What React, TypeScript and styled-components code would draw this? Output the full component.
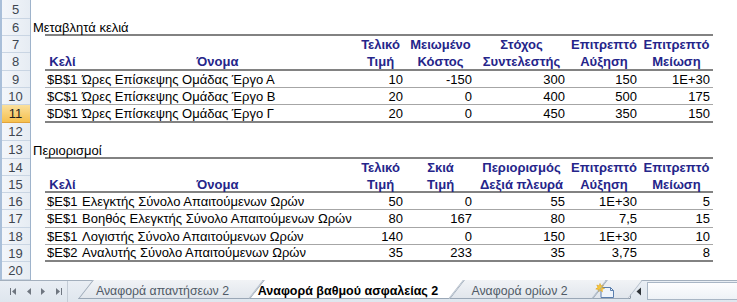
import React from "react";
import styled, { createGlobalStyle } from "styled-components";

const NAVY = "#25258a";
const COLS = "35px 275px 51px 69px 93px 72px 73px";

type Line = "thin" | "thick";

const ROWS: { n: number; h: number }[] = [
  { n: 5, h: 19 },
  { n: 6, h: 17 },
  { n: 7, h: 17 },
  { n: 8, h: 18 },
  { n: 9, h: 17 },
  { n: 10, h: 17 },
  { n: 11, h: 18 },
  { n: 12, h: 18 },
  { n: 13, h: 18 },
  { n: 14, h: 17 },
  { n: 15, h: 17 },
  { n: 16, h: 17 },
  { n: 17, h: 18 },
  { n: 18, h: 17 },
  { n: 19, h: 17 },
  { n: 20, h: 18 },
];

const changing = [
  { cell: "$B$1", name: "Ώρες Επίσκεψης Ομάδας Έργο Α", v: ["10", "-150", "300", "150", "1E+30"] },
  { cell: "$C$1", name: "Ώρες Επίσκεψης Ομάδας Έργο Β", v: ["20", "0", "400", "500", "175"] },
  { cell: "$D$1", name: "Ώρες Επίσκεψης Ομάδας Έργο Γ", v: ["20", "0", "450", "350", "150"] },
];

const constraints = [
  { cell: "$E$1", name: "Ελεγκτής Σύνολο Απαιτούμενων Ωρών", v: ["50", "0", "55", "1E+30", "5"] },
  { cell: "$E$1", name: "Βοηθός Ελεγκτής Σύνολο Απαιτούμενων Ωρών", v: ["80", "167", "80", "7,5", "15"] },
  { cell: "$E$1", name: "Λογιστής Σύνολο Απαιτούμενων Ωρών", v: ["140", "0", "150", "1E+30", "10"] },
  { cell: "$E$2", name: "Αναλυτής Σύνολο Απαιτούμενων Ωρών", v: ["35", "233", "35", "3,75", "8"] },
];

const changingHeads = [
  ["Τελικό", "Τιμή"],
  ["Μειωμένο", "Κόστος"],
  ["Στόχος", "Συντελεστής"],
  ["Επιτρεπτό", "Αύξηση"],
  ["Επιτρεπτό", "Μείωση"],
];

const constraintHeads = [
  ["Τελικό", "Τιμή"],
  ["Σκιά", "Τιμή"],
  ["Περιορισμός", "Δεξιά πλευρά"],
  ["Επιτρεπτό", "Αύξηση"],
  ["Επιτρεπτό", "Μείωση"],
];

const h = (n: number) => ROWS.find(r => r.n === n)!.h;

const NavIcon = ({ kind }: { kind: "first" | "prev" | "next" | "last" }) => (
  <svg width="9" height="9" viewBox="0 0 9 9">
    {kind === "first" && <rect x="1" y="1" width="1" height="7" fill="#6f7680" />}
    {(kind === "first" || kind === "prev") && <path d="M7 1 L3 4.5 L7 8 Z" fill="#6f7680" />}
    {(kind === "next" || kind === "last") && <path d="M2 1 L6 4.5 L2 8 Z" fill="#6f7680" />}
    {kind === "last" && <rect x="7" y="1" width="1" height="7" fill="#6f7680" />}
  </svg>
);

const NewSheetIcon = () => (
  <svg width="20" height="16" viewBox="0 0 20 16">
    <path d="M6 4.5 H15.5 L18.5 7.5 V14.5 H6 Z" fill="#eef4fb" stroke="#5b7fae" />
    <path d="M15.5 4.5 V7.5 H18.5" fill="none" stroke="#5b7fae" />
    <path
      d="M5 0.5 L6 3 L8.5 2 L7.2 4.4 L9.5 5.5 L7 6.2 L7.5 8.8 L5.3 7.2 L3.5 9 L3.4 6.4 L0.8 6 L3 4.4 L1.8 2 L4.2 2.9 Z"
      fill="#f6c73a"
      stroke="#e0a21b"
      strokeWidth="0.6"
    />
  </svg>
);

const App = () => (
  <Window>
    <GlobalStyle />
    <Sheet>
      <RowHeaders>
        {ROWS.map(r => (
          <RowNum key={r.n} $h={r.h} $selected={r.n === 11}>
            {r.n}
          </RowNum>
        ))}
      </RowHeaders>

      <Cells>
        <Blank $h={h(5)} />
        <Title label="Μεταβλητά κελιά" height={h(6)} />
        <HeadRow heads={changingHeads} height={h(7) + h(8)} />
        {changing.map((r, i) => (
          <DataRow key={i} row={r} height={h(9 + i)} line={i === changing.length - 1 ? "thick" : "thin"} />
        ))}
        <Blank $h={h(12)} />
        <Title label="Περιορισμοί" height={h(13)} />
        <HeadRow heads={constraintHeads} height={h(14) + h(15)} />
        {constraints.map((r, i) => (
          <DataRow key={i} row={r} height={h(16 + i)} line={i === constraints.length - 1 ? "thick" : "thin"} />
        ))}
        <Blank $h={h(20)} />
      </Cells>
    </Sheet>

    <TabBar>
      <NavGroup>
        <NavButton><NavIcon kind="first" /></NavButton>
        <NavButton><NavIcon kind="prev" /></NavButton>
        <NavButton><NavIcon kind="next" /></NavButton>
        <NavButton><NavIcon kind="last" /></NavButton>
      </NavGroup>
      <Tabs>
        <Tab $w={171}>Αναφορά απαντήσεων 2</Tab>
        <Tab $w={200} $active>Αναφορά βαθμού ασφαλείας 2</Tab>
        <Tab $w={143}>Αναφορά ορίων 2</Tab>
        <Tab $w={36} $icon>
          <NewSheetIcon />
        </Tab>
      </Tabs>
      <Splitter />
      <ScrollArrow>
        <svg width="6" height="9" viewBox="0 0 6 9">
          <path d="M5 0.5 L0.5 4.5 L5 8.5 Z" fill="#2e3338" />
        </svg>
      </ScrollArrow>
      <ScrollTrack />
    </TabBar>
  </Window>
);

const Title = ({ label, height }: { label: string; height: number }) => (
  <Row $h={height}>
    <TitleText>{label}</TitleText>
    <Table $line="thick" />
  </Row>
);

const HeadRow = ({ heads, height }: { heads: string[][]; height: number }) => (
  <Row $h={height}>
    <ColA />
    <Table $line="thick">
      <HeadCell>Κελί</HeadCell>
      <HeadCell>Όνομα</HeadCell>
      {heads.map((lines, i) => (
        <HeadCell key={i}>
          {lines[0]}
          <br />
          {lines[1]}
        </HeadCell>
      ))}
    </Table>
  </Row>
);

const DataRow = ({
  row,
  height,
  line,
}: {
  row: { cell: string; name: string; v: string[] };
  height: number;
  line: Line;
}) => (
  <Row $h={height}>
    <ColA />
    <Table $line={line}>
      <TextCell>{row.cell}</TextCell>
      <TextCell>{row.name}</TextCell>
      {row.v.map((v, i) => (
        <NumCell key={i}>{v}</NumCell>
      ))}
    </Table>
  </Row>
);

const GlobalStyle = createGlobalStyle`
  html, body {
    margin: 0;
    padding: 0;
    background: #fff;
  }
  body {
    width: 737px;
    height: 302px;
    overflow: hidden;
    font-family: "Liberation Sans", Arial, sans-serif;
    font-size: 13px;
    color: #000;
  }
`;

const Window = styled.div`
  width: 737px;
  height: 302px;
  display: flex;
  flex-direction: column;
  overflow: hidden;
`;

const Sheet = styled.div`
  display: flex;
  height: 280px;
`;

const RowHeaders = styled.div`
  width: 31px;
  flex-shrink: 0;
  display: flex;
  flex-direction: column;
  border-left: 2px solid #a9bfd9;
  box-sizing: border-box;
  background: linear-gradient(to right, #f3f6fa, #e6ecf3);
  border-right: 1px solid #9eb3cb;
`;

const RowNum = styled.div<{ $h: number; $selected?: boolean }>`
  height: ${p => p.$h}px;
  box-sizing: border-box;
  display: flex;
  align-items: center;
  justify-content: center;
  font-size: 13px;
  color: ${p => (p.$selected ? "#1d1d1d" : "#3e4650")};
  border-bottom: 1px solid ${p => (p.$selected ? "#e2a33a" : "#c9d5e3")};
  background: ${p => (p.$selected ? "linear-gradient(#fbe09c, #f5c04f)" : "transparent")};
  padding-right: 1px;
`;

const Cells = styled.div`
  flex: 1;
  display: flex;
  flex-direction: column;
`;

const Blank = styled.div<{ $h: number }>`
  height: ${p => p.$h}px;
`;

const Row = styled.div<{ $h: number }>`
  height: ${p => p.$h}px;
  display: flex;
`;

const ColA = styled.div`
  width: 14px;
  flex-shrink: 0;
`;

const TitleText = styled.div`
  width: 14px;
  flex-shrink: 0;
  padding-left: 2px;
  box-sizing: border-box;
  white-space: nowrap;
  display: flex;
  align-items: center;
  position: relative;
  z-index: 1;
`;

const Table = styled.div<{ $line: Line }>`
  width: 668px;
  flex-shrink: 0;
  box-sizing: border-box;
  display: grid;
  grid-template-columns: ${COLS};
  border-bottom: ${p => (p.$line === "thick" ? "2px solid #828282" : "1px solid #a6a6a6")};
`;

const TextCell = styled.div`
  display: flex;
  align-items: center;
  padding-left: 2px;
  white-space: nowrap;
`;

const NumCell = styled.div`
  display: flex;
  align-items: center;
  justify-content: flex-end;
  padding-right: 3px;
  white-space: nowrap;
`;

const HeadCell = styled.div`
  display: flex;
  align-items: flex-end;
  justify-content: center;
  text-align: center;
  font-weight: 700;
  color: ${NAVY};
  line-height: 17px;
  white-space: nowrap;
`;

const TabBar = styled.div`
  height: 22px;
  display: flex;
  align-items: stretch;
  background: linear-gradient(#e9eef4, #dfe6ee);
  border-top: 1px solid #a3afbd;
  box-sizing: border-box;
  font-size: 12px;
`;

const NavGroup = styled.div`
  width: 68px;
  display: flex;
  align-items: center;
  padding-left: 6px;
  box-sizing: border-box;
  border-right: 1px solid #c4ccd6;
`;

const NavButton = styled.div`
  width: 15px;
  display: flex;
  justify-content: center;
`;

const Tabs = styled.div`
  display: flex;
  padding-left: 4px;
`;

const Tab = styled.div<{ $w: number; $active?: boolean; $icon?: boolean }>`
  position: relative;
  width: ${p => p.$w}px;
  margin-top: -1px;
  display: flex;
  align-items: center;
  justify-content: ${p => (p.$icon ? "flex-start" : "center")};
  padding-left: ${p => (p.$icon ? "9px" : "10px")};
  box-sizing: border-box;
  white-space: nowrap;
  color: ${p => (p.$active ? "#000" : "#505a66")};
  font-weight: ${p => (p.$active ? 700 : 400)};
  font-size: ${p => (p.$active ? "12.5px" : "12.3px")};
  z-index: ${p => (p.$active ? 2 : 1)};

  &::before {
    content: "";
    position: absolute;
    top: 0;
    bottom: 3px;
    left: 6px;
    right: -6px;
    background: ${p => (p.$active ? "#fff" : "linear-gradient(#f1f3f6, #e1e6ec)")};
    border-bottom: 1px solid #9aa7b6;
    border-right: 1px solid #b3bdc9;
    transform: skewX(-38deg);
    transform-origin: bottom left;
    z-index: -1;
  }
  &::after {
    content: "";
    position: absolute;
    top: 0;
    bottom: 3px;
    left: 6px;
    width: 1px;
    background: #9aa7b6;
    transform: skewX(-38deg);
    transform-origin: bottom left;
  }
`;

const Splitter = styled.div`
  width: 5px;
  height: 12px;
  align-self: center;
  margin-left: 2px;
  border: 1px solid #8c97a4;
  background: #f4f6f9;
  border-radius: 1px;
`;

const ScrollArrow = styled.div`
  width: 12px;
  display: flex;
  align-items: center;
  justify-content: center;
  margin-left: 2px;
`;

const ScrollTrack = styled.div`
  flex: 1;
  margin: 1px 0 2px 2px;
  border: 1px solid #a9b6c5;
  border-right: none;
  background: linear-gradient(#fdfdfe, #eef2f6);
`;

export default App;
